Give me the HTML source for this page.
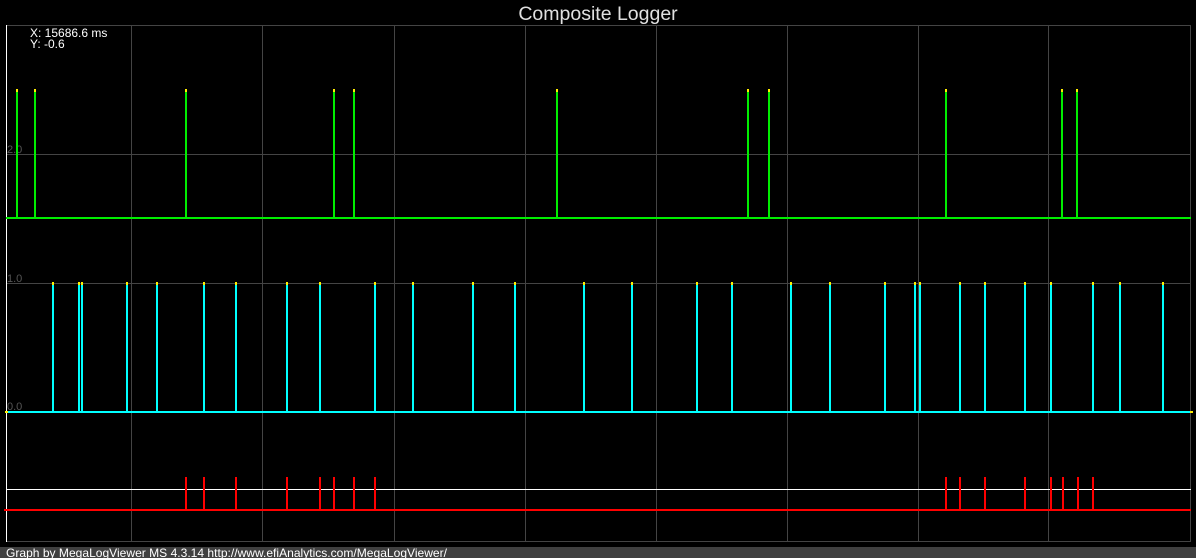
<!DOCTYPE html>
<html><head><style>
html,body{margin:0;padding:0;background:#000;width:1196px;height:558px;overflow:hidden}
svg{display:block}
text{font-family:"Liberation Sans",sans-serif}
</style></head><body>
<svg width="1196" height="558" xmlns="http://www.w3.org/2000/svg">
<rect width="1196" height="558" fill="#000"/>
<text x="598" y="20" font-size="19.5" fill="#e0e0e0" text-anchor="middle">Composite Logger</text>
<g stroke="#444" stroke-width="1">
<line x1="131.5" y1="25" x2="131.5" y2="542"/><line x1="262.5" y1="25" x2="262.5" y2="542"/>
<line x1="394.5" y1="25" x2="394.5" y2="542"/><line x1="525.5" y1="25" x2="525.5" y2="542"/>
<line x1="656.5" y1="25" x2="656.5" y2="542"/><line x1="787.5" y1="25" x2="787.5" y2="542"/>
<line x1="918.5" y1="25" x2="918.5" y2="542"/><line x1="1048.5" y1="25" x2="1048.5" y2="542"/>
<line x1="1190.5" y1="25" x2="1190.5" y2="542"/>
<line x1="6" y1="25.5" x2="1191" y2="25.5"/><line x1="6" y1="154.5" x2="1191" y2="154.5"/>
<line x1="6" y1="283.5" x2="1191" y2="283.5"/><line x1="6" y1="541.5" x2="1191" y2="541.5"/>
</g>
<line x1="6.5" y1="25" x2="6.5" y2="542" stroke="#fff"/>
<text x="30" y="37" font-size="12" fill="#fff">X: 15686.6 ms</text>
<text x="30" y="48" font-size="12" fill="#fff">Y: -0.6</text>
<text x="7" y="153" font-size="11" fill="#555">2.0</text>
<text x="7" y="282" font-size="11" fill="#555">1.0</text>
<text x="7" y="410" font-size="11" fill="#555">0.0</text>
<g stroke="#00ee00" stroke-width="2">
<line x1="6" y1="218" x2="1191" y2="218"/>
<path d="M17 218V90M35 218V90M186 218V90M334 218V90M354 218V90M557 218V90M748 218V90M769 218V90M946 218V90M1062 218V90M1077 218V90"/>
</g>
<g stroke="#00ffff" stroke-width="2">
<line x1="6" y1="412" x2="1191" y2="412"/>
<path d="M53 412V283M79 412V283M82 412V283M127 412V283M157 412V283M204 412V283M236 412V283M287 412V283M320 412V283M375 412V283M413 412V283M473 412V283M515 412V283M584 412V283M632 412V283M697 412V283M732 412V283M791 412V283M830 412V283M885 412V283M915 412V283M920 412V283M960 412V283M985 412V283M1025 412V283M1051 412V283M1093 412V283M1120 412V283M1163 412V283"/>
</g>
<g stroke="#ffee00" stroke-width="2">
<path d="M17 92V89M35 92V89M186 92V89M334 92V89M354 92V89M557 92V89M748 92V89M769 92V89M946 92V89M1062 92V89M1077 92V89"/>
<path d="M53 285V282M79 285V282M82 285V282M127 285V282M157 285V282M204 285V282M236 285V282M287 285V282M320 285V282M375 285V282M413 285V282M473 285V282M515 285V282M584 285V282M632 285V282M697 285V282M732 285V282M791 285V282M830 285V282M885 285V282M915 285V282M920 285V282M960 285V282M985 285V282M1025 285V282M1051 285V282M1093 285V282M1120 285V282M1163 285V282"/>
<path d="M5 412h3M1190 412h3"/>
</g>
<line x1="6" y1="489.5" x2="1191" y2="489.5" stroke="#fff"/>
<g stroke="#ff0000" stroke-width="2">
<line x1="4" y1="510" x2="1191" y2="510"/>
<path d="M186 510V477M204 510V477M236 510V477M287 510V477M320 510V477M334 510V477M354 510V477M375 510V477M946 510V477M960 510V477M985 510V477M1025 510V477M1051 510V477M1063 510V477M1078 510V477M1093 510V477"/>
</g>
<rect x="0" y="547" width="1196" height="11" fill="#404040"/>
<text x="6" y="557" font-size="12" fill="#fff" textLength="441" lengthAdjust="spacingAndGlyphs">Graph by MegaLogViewer MS 4.3.14 http://www.efiAnalytics.com/MegaLogViewer/</text>
</svg>
</body></html>
